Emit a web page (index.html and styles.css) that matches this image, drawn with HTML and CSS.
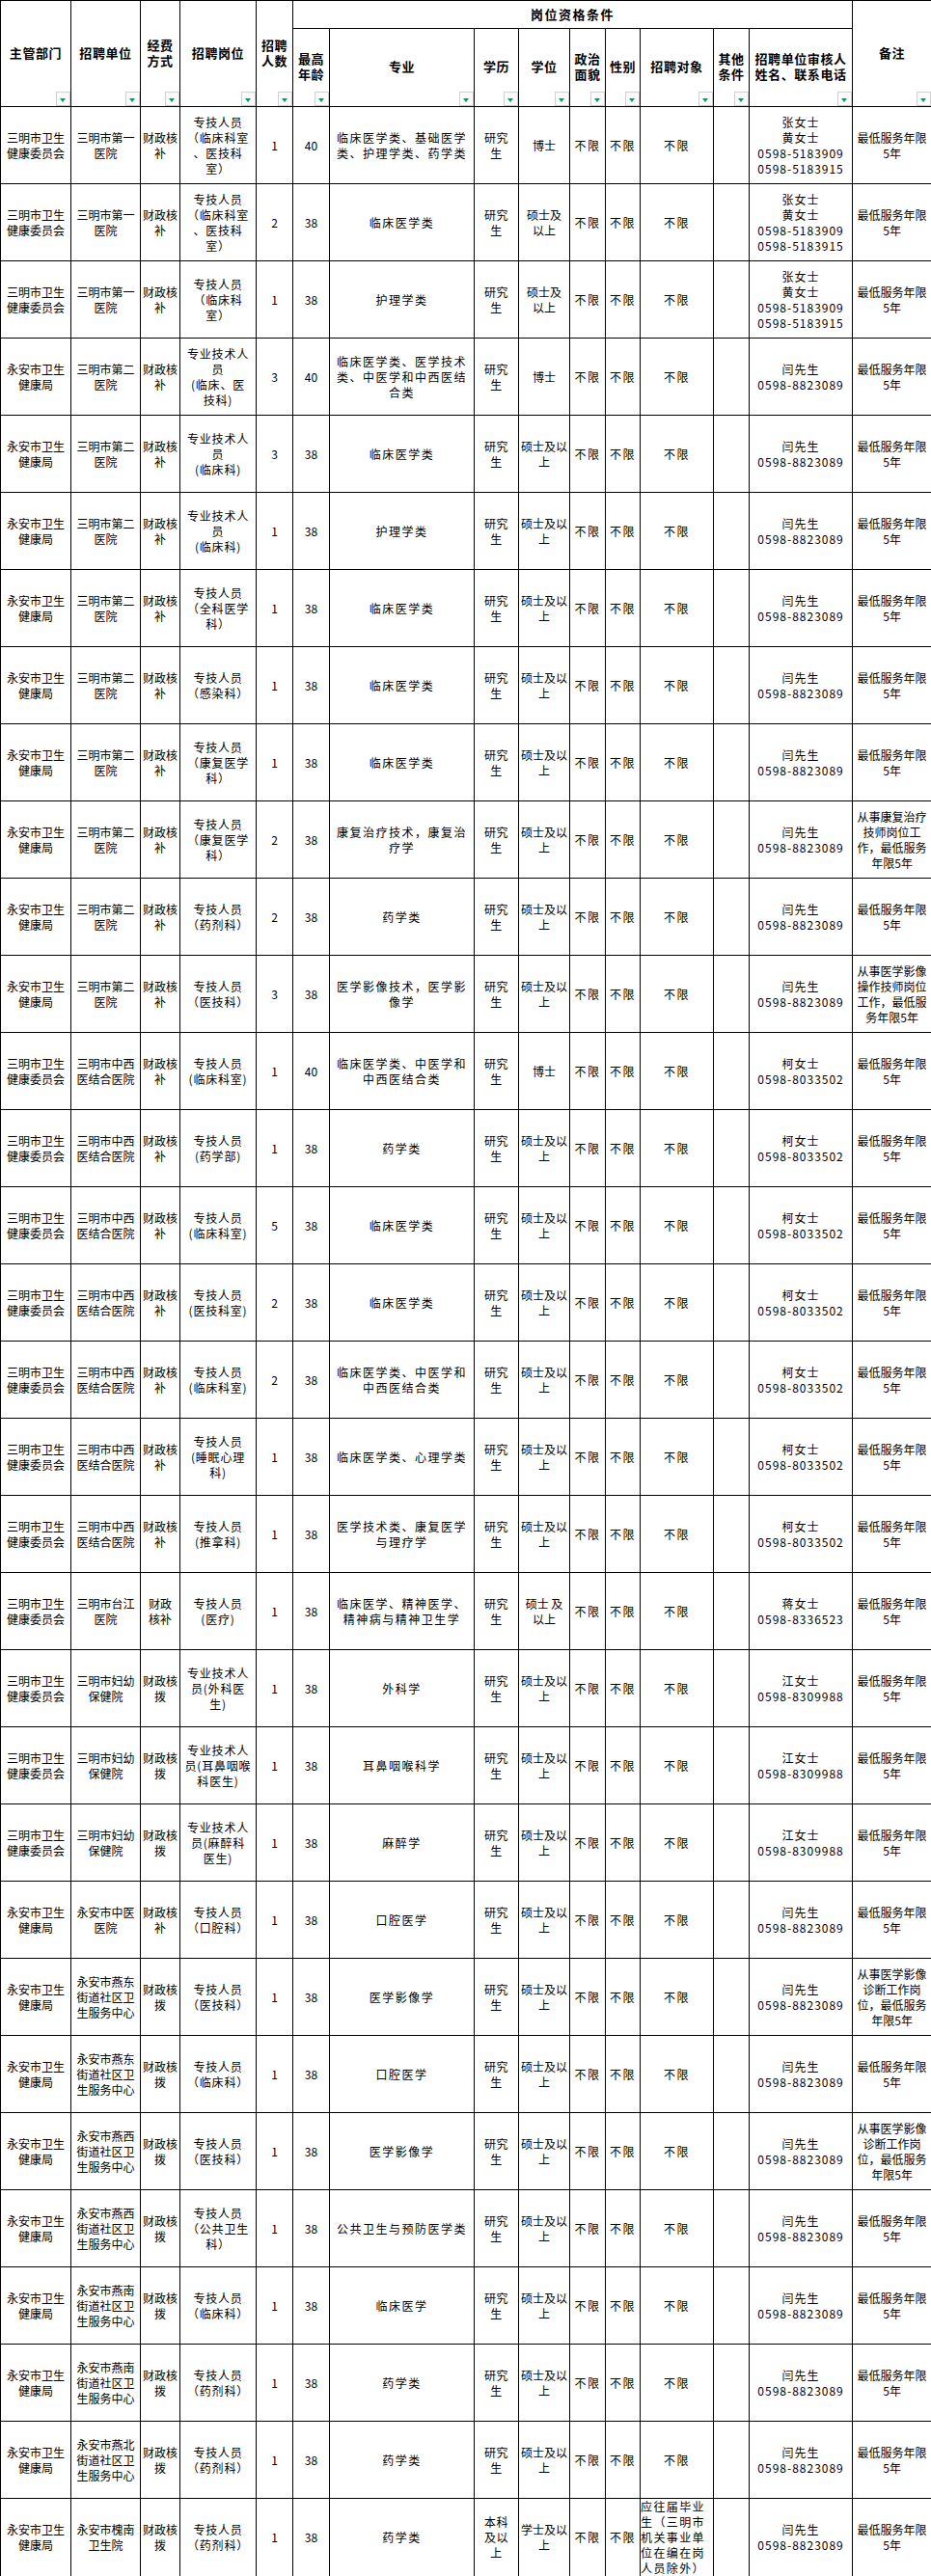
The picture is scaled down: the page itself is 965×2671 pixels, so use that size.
FILE: index.html
```html
<!DOCTYPE html>
<html lang="zh-CN">
<head>
<meta charset="utf-8">
<title>岗位信息表</title>
<link rel="stylesheet" href="styles.css">
</head>
<body>
<table class="jobs">
<colgroup>
<col class="w73"><col class="w72"><col class="w41"><col class="w79"><col class="w38"><col class="w38"><col class="w150"><col class="w46"><col class="w53"><col class="w37"><col class="w36"><col class="w76"><col class="w37"><col class="w107"><col class="w82">
</colgroup>
<thead>
<tr class="h1">
<th rowspan="2">主管部门<span class="flt"></span></th>
<th rowspan="2">招聘单位<span class="flt"></span></th>
<th rowspan="2">经费<br>方式<span class="flt"></span></th>
<th rowspan="2">招聘岗位<span class="flt"></span></th>
<th rowspan="2">招聘<br>人数<span class="flt"></span></th>
<th colspan="9" class="group">岗位资格条件</th>
<th rowspan="2">备注<span class="flt"></span></th>
</tr>
<tr class="h2">
<th>最高<br>年龄<span class="flt"></span></th>
<th>专业<span class="flt"></span></th>
<th>学历<span class="flt"></span></th>
<th>学位<span class="flt"></span></th>
<th>政治<br>面貌<span class="flt"></span></th>
<th>性别<span class="flt"></span></th>
<th>招聘对象<span class="flt"></span></th>
<th>其他<br>条件<span class="flt"></span></th>
<th>招聘单位审核人<br>姓名、联系电话<span class="flt"></span></th>
</tr>
</thead>
<tbody>
<tr><td>三明市卫生<br>健康委员会</td><td>三明市第一<br>医院</td><td>财政核<br>补</td><td>专技人员<br>（临床科室<br>、医技科<br>室）</td><td>1</td><td>40</td><td>临床医学类、基础医学<br>类、护理学类、药学类</td><td>研究<br>生</td><td>博士</td><td>不限</td><td>不限</td><td>不限</td><td></td><td>张女士<br>黄女士<br>0598-5183909<br>0598-5183915</td><td>最低服务年限<br>5年</td></tr>
<tr><td>三明市卫生<br>健康委员会</td><td>三明市第一<br>医院</td><td>财政核<br>补</td><td>专技人员<br>（临床科室<br>、医技科<br>室）</td><td>2</td><td>38</td><td>临床医学类</td><td>研究<br>生</td><td>硕士及<br>以上</td><td>不限</td><td>不限</td><td>不限</td><td></td><td>张女士<br>黄女士<br>0598-5183909<br>0598-5183915</td><td>最低服务年限<br>5年</td></tr>
<tr><td>三明市卫生<br>健康委员会</td><td>三明市第一<br>医院</td><td>财政核<br>补</td><td>专技人员<br>（临床科<br>室）</td><td>1</td><td>38</td><td>护理学类</td><td>研究<br>生</td><td>硕士及<br>以上</td><td>不限</td><td>不限</td><td>不限</td><td></td><td>张女士<br>黄女士<br>0598-5183909<br>0598-5183915</td><td>最低服务年限<br>5年</td></tr>
<tr><td>永安市卫生<br>健康局</td><td>三明市第二<br>医院</td><td>财政核<br>补</td><td>专业技术人<br>员<br>(临床、医<br>技科)</td><td>3</td><td>40</td><td>临床医学类、医学技术<br>类、中医学和中西医结<br>合类</td><td>研究<br>生</td><td>博士</td><td>不限</td><td>不限</td><td>不限</td><td></td><td>闫先生<br>0598-8823089</td><td>最低服务年限<br>5年</td></tr>
<tr><td>永安市卫生<br>健康局</td><td>三明市第二<br>医院</td><td>财政核<br>补</td><td>专业技术人<br>员<br>(临床科)</td><td>3</td><td>38</td><td>临床医学类</td><td>研究<br>生</td><td>硕士及以<br>上</td><td>不限</td><td>不限</td><td>不限</td><td></td><td>闫先生<br>0598-8823089</td><td>最低服务年限<br>5年</td></tr>
<tr><td>永安市卫生<br>健康局</td><td>三明市第二<br>医院</td><td>财政核<br>补</td><td>专业技术人<br>员<br>(临床科)</td><td>1</td><td>38</td><td>护理学类</td><td>研究<br>生</td><td>硕士及以<br>上</td><td>不限</td><td>不限</td><td>不限</td><td></td><td>闫先生<br>0598-8823089</td><td>最低服务年限<br>5年</td></tr>
<tr><td>永安市卫生<br>健康局</td><td>三明市第二<br>医院</td><td>财政核<br>补</td><td>专技人员<br>（全科医学<br>科）</td><td>1</td><td>38</td><td>临床医学类</td><td>研究<br>生</td><td>硕士及以<br>上</td><td>不限</td><td>不限</td><td>不限</td><td></td><td>闫先生<br>0598-8823089</td><td>最低服务年限<br>5年</td></tr>
<tr><td>永安市卫生<br>健康局</td><td>三明市第二<br>医院</td><td>财政核<br>补</td><td>专技人员<br>（感染科）</td><td>1</td><td>38</td><td>临床医学类</td><td>研究<br>生</td><td>硕士及以<br>上</td><td>不限</td><td>不限</td><td>不限</td><td></td><td>闫先生<br>0598-8823089</td><td>最低服务年限<br>5年</td></tr>
<tr><td>永安市卫生<br>健康局</td><td>三明市第二<br>医院</td><td>财政核<br>补</td><td>专技人员<br>（康复医学<br>科）</td><td>1</td><td>38</td><td>临床医学类</td><td>研究<br>生</td><td>硕士及以<br>上</td><td>不限</td><td>不限</td><td>不限</td><td></td><td>闫先生<br>0598-8823089</td><td>最低服务年限<br>5年</td></tr>
<tr><td>永安市卫生<br>健康局</td><td>三明市第二<br>医院</td><td>财政核<br>补</td><td>专技人员<br>（康复医学<br>科）</td><td>2</td><td>38</td><td>康复治疗技术，康复治<br>疗学</td><td>研究<br>生</td><td>硕士及以<br>上</td><td>不限</td><td>不限</td><td>不限</td><td></td><td>闫先生<br>0598-8823089</td><td>从事康复治疗<br>技师岗位工<br>作，最低服务<br>年限5年</td></tr>
<tr><td>永安市卫生<br>健康局</td><td>三明市第二<br>医院</td><td>财政核<br>补</td><td>专技人员<br>（药剂科）</td><td>2</td><td>38</td><td>药学类</td><td>研究<br>生</td><td>硕士及以<br>上</td><td>不限</td><td>不限</td><td>不限</td><td></td><td>闫先生<br>0598-8823089</td><td>最低服务年限<br>5年</td></tr>
<tr><td>永安市卫生<br>健康局</td><td>三明市第二<br>医院</td><td>财政核<br>补</td><td>专技人员<br>（医技科）</td><td>3</td><td>38</td><td>医学影像技术，医学影<br>像学</td><td>研究<br>生</td><td>硕士及以<br>上</td><td>不限</td><td>不限</td><td>不限</td><td></td><td>闫先生<br>0598-8823089</td><td>从事医学影像<br>操作技师岗位<br>工作，最低服<br>务年限5年</td></tr>
<tr><td>三明市卫生<br>健康委员会</td><td>三明市中西<br>医结合医院</td><td>财政核<br>补</td><td>专技人员<br>(临床科室)</td><td>1</td><td>40</td><td>临床医学类、中医学和<br>中西医结合类</td><td>研究<br>生</td><td>博士</td><td>不限</td><td>不限</td><td>不限</td><td></td><td>柯女士<br>0598-8033502</td><td>最低服务年限<br>5年</td></tr>
<tr><td>三明市卫生<br>健康委员会</td><td>三明市中西<br>医结合医院</td><td>财政核<br>补</td><td>专技人员<br>(药学部)</td><td>1</td><td>38</td><td>药学类</td><td>研究<br>生</td><td>硕士及以<br>上</td><td>不限</td><td>不限</td><td>不限</td><td></td><td>柯女士<br>0598-8033502</td><td>最低服务年限<br>5年</td></tr>
<tr><td>三明市卫生<br>健康委员会</td><td>三明市中西<br>医结合医院</td><td>财政核<br>补</td><td>专技人员<br>(临床科室)</td><td>5</td><td>38</td><td>临床医学类</td><td>研究<br>生</td><td>硕士及以<br>上</td><td>不限</td><td>不限</td><td>不限</td><td></td><td>柯女士<br>0598-8033502</td><td>最低服务年限<br>5年</td></tr>
<tr><td>三明市卫生<br>健康委员会</td><td>三明市中西<br>医结合医院</td><td>财政核<br>补</td><td>专技人员<br>(医技科室)</td><td>2</td><td>38</td><td>临床医学类</td><td>研究<br>生</td><td>硕士及以<br>上</td><td>不限</td><td>不限</td><td>不限</td><td></td><td>柯女士<br>0598-8033502</td><td>最低服务年限<br>5年</td></tr>
<tr><td>三明市卫生<br>健康委员会</td><td>三明市中西<br>医结合医院</td><td>财政核<br>补</td><td>专技人员<br>(临床科室)</td><td>2</td><td>38</td><td>临床医学类、中医学和<br>中西医结合类</td><td>研究<br>生</td><td>硕士及以<br>上</td><td>不限</td><td>不限</td><td>不限</td><td></td><td>柯女士<br>0598-8033502</td><td>最低服务年限<br>5年</td></tr>
<tr><td>三明市卫生<br>健康委员会</td><td>三明市中西<br>医结合医院</td><td>财政核<br>补</td><td>专技人员<br>(睡眠心理<br>科)</td><td>1</td><td>38</td><td>临床医学类、心理学类</td><td>研究<br>生</td><td>硕士及以<br>上</td><td>不限</td><td>不限</td><td>不限</td><td></td><td>柯女士<br>0598-8033502</td><td>最低服务年限<br>5年</td></tr>
<tr><td>三明市卫生<br>健康委员会</td><td>三明市中西<br>医结合医院</td><td>财政核<br>补</td><td>专技人员<br>(推拿科)</td><td>1</td><td>38</td><td>医学技术类、康复医学<br>与理疗学</td><td>研究<br>生</td><td>硕士及以<br>上</td><td>不限</td><td>不限</td><td>不限</td><td></td><td>柯女士<br>0598-8033502</td><td>最低服务年限<br>5年</td></tr>
<tr><td>三明市卫生<br>健康委员会</td><td>三明市台江<br>医院</td><td>财政<br>核补</td><td>专技人员<br>(医疗)</td><td>1</td><td>38</td><td>临床医学、精神医学、<br>精神病与精神卫生学</td><td>研究<br>生</td><td>硕士 及<br>以上</td><td>不限</td><td>不限</td><td>不限</td><td></td><td>蒋女士<br>0598-8336523</td><td>最低服务年限<br>5年</td></tr>
<tr><td>三明市卫生<br>健康委员会</td><td>三明市妇幼<br>保健院</td><td>财政核<br>拨</td><td>专业技术人<br>员(外科医<br>生)</td><td>1</td><td>38</td><td>外科学</td><td>研究<br>生</td><td>硕士及以<br>上</td><td>不限</td><td>不限</td><td>不限</td><td></td><td>江女士<br>0598-8309988</td><td>最低服务年限<br>5年</td></tr>
<tr><td>三明市卫生<br>健康委员会</td><td>三明市妇幼<br>保健院</td><td>财政核<br>拨</td><td>专业技术人<br>员(耳鼻咽喉<br>科医生)</td><td>1</td><td>38</td><td>耳鼻咽喉科学</td><td>研究<br>生</td><td>硕士及以<br>上</td><td>不限</td><td>不限</td><td>不限</td><td></td><td>江女士<br>0598-8309988</td><td>最低服务年限<br>5年</td></tr>
<tr><td>三明市卫生<br>健康委员会</td><td>三明市妇幼<br>保健院</td><td>财政核<br>拨</td><td>专业技术人<br>员(麻醉科<br>医生)</td><td>1</td><td>38</td><td>麻醉学</td><td>研究<br>生</td><td>硕士及以<br>上</td><td>不限</td><td>不限</td><td>不限</td><td></td><td>江女士<br>0598-8309988</td><td>最低服务年限<br>5年</td></tr>
<tr><td>永安市卫生<br>健康局</td><td>永安市中医<br>医院</td><td>财政核<br>补</td><td>专技人员<br>（口腔科）</td><td>1</td><td>38</td><td>口腔医学</td><td>研究<br>生</td><td>硕士及以<br>上</td><td>不限</td><td>不限</td><td>不限</td><td></td><td>闫先生<br>0598-8823089</td><td>最低服务年限<br>5年</td></tr>
<tr><td>永安市卫生<br>健康局</td><td>永安市燕东<br>街道社区卫<br>生服务中心</td><td>财政核<br>拨</td><td>专技人员<br>（医技科）</td><td>1</td><td>38</td><td>医学影像学</td><td>研究<br>生</td><td>硕士及以<br>上</td><td>不限</td><td>不限</td><td>不限</td><td></td><td>闫先生<br>0598-8823089</td><td>从事医学影像<br>诊断工作岗<br>位，最低服务<br>年限5年</td></tr>
<tr><td>永安市卫生<br>健康局</td><td>永安市燕东<br>街道社区卫<br>生服务中心</td><td>财政核<br>拨</td><td>专技人员<br>（临床科）</td><td>1</td><td>38</td><td>口腔医学</td><td>研究<br>生</td><td>硕士及以<br>上</td><td>不限</td><td>不限</td><td>不限</td><td></td><td>闫先生<br>0598-8823089</td><td>最低服务年限<br>5年</td></tr>
<tr><td>永安市卫生<br>健康局</td><td>永安市燕西<br>街道社区卫<br>生服务中心</td><td>财政核<br>拨</td><td>专技人员<br>（医技科）</td><td>1</td><td>38</td><td>医学影像学</td><td>研究<br>生</td><td>硕士及以<br>上</td><td>不限</td><td>不限</td><td>不限</td><td></td><td>闫先生<br>0598-8823089</td><td>从事医学影像<br>诊断工作岗<br>位，最低服务<br>年限5年</td></tr>
<tr><td>永安市卫生<br>健康局</td><td>永安市燕西<br>街道社区卫<br>生服务中心</td><td>财政核<br>拨</td><td>专技人员<br>（公共卫生<br>科）</td><td>1</td><td>38</td><td>公共卫生与预防医学类</td><td>研究<br>生</td><td>硕士及以<br>上</td><td>不限</td><td>不限</td><td>不限</td><td></td><td>闫先生<br>0598-8823089</td><td>最低服务年限<br>5年</td></tr>
<tr><td>永安市卫生<br>健康局</td><td>永安市燕南<br>街道社区卫<br>生服务中心</td><td>财政核<br>拨</td><td>专技人员<br>（临床科）</td><td>1</td><td>38</td><td>临床医学</td><td>研究<br>生</td><td>硕士及以<br>上</td><td>不限</td><td>不限</td><td>不限</td><td></td><td>闫先生<br>0598-8823089</td><td>最低服务年限<br>5年</td></tr>
<tr><td>永安市卫生<br>健康局</td><td>永安市燕南<br>街道社区卫<br>生服务中心</td><td>财政核<br>拨</td><td>专技人员<br>（药剂科）</td><td>1</td><td>38</td><td>药学类</td><td>研究<br>生</td><td>硕士及以<br>上</td><td>不限</td><td>不限</td><td>不限</td><td></td><td>闫先生<br>0598-8823089</td><td>最低服务年限<br>5年</td></tr>
<tr><td>永安市卫生<br>健康局</td><td>永安市燕北<br>街道社区卫<br>生服务中心</td><td>财政核<br>拨</td><td>专技人员<br>（药剂科）</td><td>1</td><td>38</td><td>药学类</td><td>研究<br>生</td><td>硕士及以<br>上</td><td>不限</td><td>不限</td><td>不限</td><td></td><td>闫先生<br>0598-8823089</td><td>最低服务年限<br>5年</td></tr>
<tr><td>永安市卫生<br>健康局</td><td>永安市槐南<br>卫生院</td><td>财政核<br>拨</td><td>专技人员<br>（药剂科）</td><td>1</td><td>38</td><td>药学类</td><td>本科<br>及以<br>上</td><td>学士及以<br>上</td><td>不限</td><td>不限</td><td class="left">应往届毕业<br>生（三明市<br>机关事业单<br>位在编在岗<br>人员除外）</td><td></td><td>闫先生<br>0598-8823089</td><td>最低服务年限<br>5年</td></tr>
</tbody>
</table>
</body>
</html>
```

FILE: styles.css
```css
html, body {
  margin: 0;
  padding: 0;
  background: #ffffff;
}

body {
  font-family: "Noto Sans CJK SC", "Noto Sans", sans-serif;
  color: #000000;
}

.jobs {
  border-collapse: collapse;
  table-layout: fixed;
  width: 965px;
}

.w73 { width: 73px; }
.w72 { width: 72px; }
.w41 { width: 41px; }
.w79 { width: 79px; }
.w38 { width: 38px; }
.w150 { width: 150px; }
.w46 { width: 46px; }
.w53 { width: 53px; }
.w37 { width: 37px; }
.w36 { width: 36px; }
.w76 { width: 76px; }
.w107 { width: 107px; }
.w82 { width: 82px; }

.jobs th,
.jobs td {
  border: 1px solid #000000;
  padding: 0;
  text-align: center;
  vertical-align: middle;
  white-space: nowrap;
  overflow: visible;
}

.jobs th {
  position: relative;
  font-size: 13px;
  line-height: 16px;
  font-weight: 700;
  letter-spacing: 0.6px;
  padding-bottom: 2px;
}

.jobs th.group {
  padding-bottom: 0;
  letter-spacing: 1.5px;
}

.h1 { height: 29px; }
.h2 { height: 81px; }

.jobs tbody tr { height: 80px; }

.jobs td {
  font-size: 12px;
  line-height: 16px;
  font-weight: 400;
  letter-spacing: 0;
}

.jobs td:nth-child(4) { letter-spacing: 0.8px; }
.jobs td:nth-child(7) { letter-spacing: 1.5px; }
.jobs td:nth-child(8) { letter-spacing: 0.5px; }
.jobs td:nth-child(10),
.jobs td:nth-child(11),
.jobs td:nth-child(12) { letter-spacing: 1.5px; }
.jobs td:nth-child(14) { letter-spacing: 1px; }

.jobs td.left {
  text-align: left;
  letter-spacing: 1.4px;
}

.flt {
  position: absolute;
  right: 0;
  bottom: 0;
  width: 13px;
  height: 13px;
  border: 1px solid #d0d0d0;
  background: #fbfbfb;
}

.flt::after {
  content: "";
  position: absolute;
  left: 3px;
  top: 6px;
  width: 0;
  height: 0;
  border-left: 3.5px solid transparent;
  border-right: 3.5px solid transparent;
  border-top: 4px solid #14955f;
}
```
